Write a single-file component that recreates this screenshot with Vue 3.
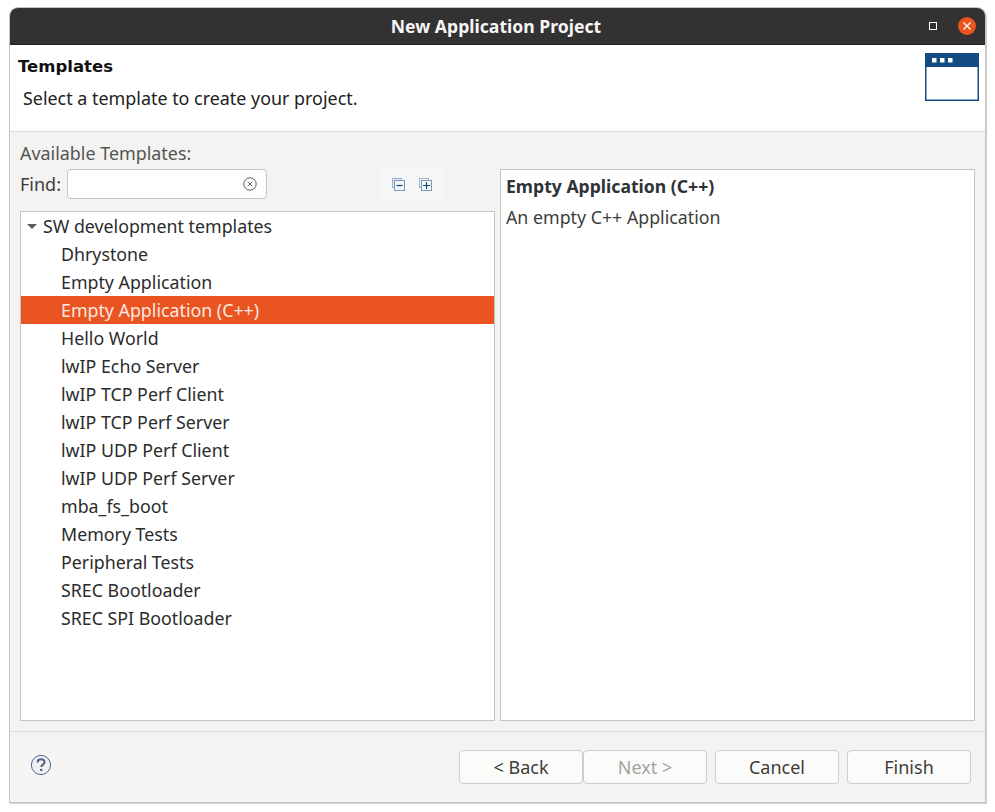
<script setup>
const templates = [
  'Dhrystone',
  'Empty Application',
  'Empty Application (C++)',
  'Hello World',
  'lwIP Echo Server',
  'lwIP TCP Perf Client',
  'lwIP TCP Perf Server',
  'lwIP UDP Perf Client',
  'lwIP UDP Perf Server',
  'mba_fs_boot',
  'Memory Tests',
  'Peripheral Tests',
  'SREC Bootloader',
  'SREC SPI Bootloader'
]
const selected = 'Empty Application (C++)'
</script>

<template>
  <div class="page">
    <div class="window">
      <div class="titlebar">
        <span class="title">New Application Project</span>
        <span class="max-btn"></span>
        <svg class="close-btn" viewBox="0 0 18 18" width="18" height="18">
          <circle cx="9" cy="9" r="9" fill="#e95420" />
          <path d="M5.5 5.5l7 7M12.5 5.5l-7 7" stroke="#fff" stroke-width="1.3" />
        </svg>
      </div>

      <div class="header">
        <div class="header-text">
          <div class="header-title">Templates</div>
          <div class="header-sub">Select a template to create your project.</div>
        </div>
        <svg class="wizard-icon" viewBox="0 0 54 48" width="54" height="48">
          <rect x="0" y="0" width="54" height="48" fill="#134c83" />
          <rect x="1.500" y="14" width="51" height="32.500" fill="#fff" />
          <rect x="7" y="5" width="4.500" height="4.500" fill="#fff" />
          <rect x="15" y="5" width="4.500" height="4.500" fill="#fff" />
          <rect x="23" y="5" width="4.500" height="4.500" fill="#fff" />
        </svg>
      </div>

      <div class="body">
        <div class="avail-label">Available Templates:</div>
        <div class="columns">
          <div class="left">
            <div class="find-row">
              <span class="find-label">Find:</span>
              <div class="find-input">
                <svg viewBox="0 0 14 14" width="14" height="14">
                  <circle cx="7" cy="7" r="6.200" fill="none" stroke="#5e5e5e" stroke-width="1" />
                  <path d="M4.600 4.600l4.800 4.800M9.400 4.600l-4.800 4.800" stroke="#5e5e5e" stroke-width="1" />
                </svg>
              </div>
              <div class="tree-tools">
                <svg viewBox="0 0 13 13" width="13" height="13">
                  <rect x="0.500" y="0.500" width="9" height="9" fill="#dfe9f3" stroke="#9fb2c9" />
                  <rect x="2.500" y="2.500" width="10" height="10" fill="#eef4fa" stroke="#7f98b5" />
                  <path d="M4.500 7.500h6" stroke="#134c83" stroke-width="1.200" />
                </svg>
                <svg viewBox="0 0 13 13" width="13" height="13">
                  <rect x="0.500" y="0.500" width="9" height="9" fill="#f0f4f8" stroke="#9fb2c9" />
                  <rect x="2.500" y="2.500" width="10" height="10" fill="#f6f9fc" stroke="#7f98b5" />
                  <path d="M4 7.500h7M7.500 4v7" stroke="#134c83" stroke-width="1.200" />
                </svg>
              </div>
            </div>
            <div class="tree">
              <div class="row group">
                <span class="arrow"></span>
                <span>SW development templates</span>
              </div>
              <div
                v-for="t in templates"
                :key="t"
                :class="['row', 'item', { active: t === selected }]"
              >
                {{ t }}
              </div>
            </div>
          </div>
          <div class="detail">
            <div class="detail-title">Empty Application (C++)</div>
            <div class="detail-desc">An empty C++ Application</div>
          </div>
        </div>
      </div>

      <div class="footer">
        <div class="help">
          <svg viewBox="0 0 22 22" width="22" height="22">
            <circle cx="11" cy="11" r="9.600" fill="#f0f1f4" stroke="#4f6288" stroke-width="1" />
            <path d="M7.600 8.400c0-2 1.500-3.200 3.500-3.200s3.400 1.100 3.400 2.900c0 2.500-3.200 2.500-3.200 5" fill="none" stroke="#4f6288" stroke-width="2" />
            <circle cx="11.200" cy="16" r="1.300" fill="#4f6288" />
          </svg>
        </div>
        <div class="buttons">
          <div class="nav-pair">
            <button class="btn">&lt; Back</button>
            <button class="btn disabled">Next &gt;</button>
          </div>
          <button class="btn">Cancel</button>
          <button class="btn">Finish</button>
        </div>
      </div>
    </div>
  </div>
</template>

<style>
html, body {
  margin: 0;
  background: #fff;
}
</style>

<style scoped>
.page {
  width: 995px;
  height: 812px;
  padding: 8px 0 0 10px;
  box-sizing: border-box;
  font-family: "Noto Sans", "Open Sans", sans-serif;
  font-size: 18px;
  color: #3d3d3a;
}

.window {
  width: 975px;
  height: 794px;
  display: flex;
  flex-direction: column;
  background: #f4f3f1;
  border-radius: 8px 8px 0 0;
  box-shadow: 0 0 0 1px #c4c4c4, 1px 1px 1px 1px #cfcfcf;
}

.titlebar {
  height: 37px;
  flex: none;
  position: relative;
  display: flex;
  align-items: center;
  justify-content: center;
  background: #333131;
  border-radius: 8px 8px 0 0;
  border-bottom: 1px solid #222;
  box-sizing: border-box;
}

.title {
  color: #f6f6f6;
  font-weight: 700;
  font-size: 17.600px;
  margin-left: -3px;
}

.max-btn {
  position: absolute;
  left: 919px;
  top: 14px;
  width: 6px;
  height: 6px;
  border: 1px solid #fff;
}

.close-btn {
  position: absolute;
  left: 948px;
  top: 9px;
}

.header {
  height: 87px;
  flex: none;
  display: flex;
  justify-content: space-between;
  background: #fff;
  border-bottom: 1px solid #dcdcda;
  box-sizing: border-box;
  padding: 9px 6px 0 8px;
}

.header-title {
  font-family: "DejaVu Sans", sans-serif;
  font-weight: 700;
  font-size: 16.500px;
  line-height: 26px;
  color: #111;
}

.header-sub {
  margin-top: 5px;
  padding-left: 5px;
  font-size: 17.900px;
  line-height: 26px;
  color: #222;
}

.wizard-icon {
  margin-top: -1px;
}

.body {
  height: 600px;
  flex: none;
  box-sizing: border-box;
  padding: 0 10px 10px;
  border-bottom: 1px solid #dcdcda;
  display: flex;
  flex-direction: column;
}

.avail-label {
  height: 37px;
  flex: none;
  padding-top: 8px;
  box-sizing: border-box;
  line-height: 26px;
  font-size: 17.900px;
  color: #555551;
}

.columns {
  flex: 1;
  min-height: 0;
  display: grid;
  grid-template-columns: 475px 475px;
  gap: 5px;
}

.left {
  display: flex;
  flex-direction: column;
  min-height: 0;
}

.find-row {
  height: 30px;
  flex: none;
  margin-bottom: 12px;
  display: flex;
  align-items: center;
  position: relative;
}

.find-label {
  width: 47px;
  flex: none;
  font-size: 18px;
  color: #3d3d3a;
}

.find-input {
  width: 200px;
  height: 30px;
  flex: none;
  box-sizing: border-box;
  background: #fff;
  border: 1px solid #c4c4c2;
  border-radius: 4px;
  display: flex;
  align-items: center;
  justify-content: flex-end;
  padding-right: 9px;
}

.tree-tools {
  margin-left: 114px;
  width: 61px;
  height: 31px;
  flex: none;
  box-sizing: border-box;
  background: #f6f6f6;
  display: flex;
  align-items: center;
  gap: 14px;
  padding-left: 11px;
}

.tree {
  flex: 1;
  min-height: 0;
  box-sizing: border-box;
  background: #fff;
  border: 1px solid #c4c4c2;
}

.row {
  height: 28px;
  line-height: 28px;
  font-size: 17.800px;
  color: #2c2c2c;
  white-space: nowrap;
}

.group {
  display: flex;
  align-items: center;
  padding-left: 6px;
}

.arrow {
  width: 0;
  height: 0;
  margin-right: 6px;
  border-left: 5px solid transparent;
  border-right: 5px solid transparent;
  border-top: 5px solid #5e5e5e;
}

.item {
  padding-left: 40px;
}

.item.active {
  background: #e95420;
  color: #fbe9e2;
}

.detail {
  box-sizing: border-box;
  background: #fff;
  border: 1px solid #c4c4c2;
  padding: 4px 5px;
}

.detail-title {
  font-weight: 700;
  font-size: 17.600px;
  line-height: 24px;
  color: #2f3338;
}

.detail-desc {
  margin-top: 7px;
  font-size: 17.800px;
  line-height: 24px;
  color: #3d3d3a;
}

.footer {
  flex: 1;
  display: flex;
  align-items: flex-start;
  justify-content: space-between;
  padding: 18px 14px 0 14px;
}

.help {
  width: 34px;
  height: 32px;
  box-sizing: border-box;
  padding-bottom: 2px;
  background: #f6f5f4;
  display: flex;
  align-items: center;
  justify-content: center;
}

.buttons {
  display: flex;
  gap: 8px;
}

.nav-pair {
  display: flex;
  gap: 0;
}

.btn {
  width: 124px;
  height: 34px;
  box-sizing: border-box;
  padding: 0;
  background: #fbfbfa;
  border: 1px solid #cdcdcb;
  border-radius: 4px;
  font-family: inherit;
  font-size: 18px;
  color: #3d3d3a;
}

.btn.disabled {
  color: #a3a3a0;
}
</style>
